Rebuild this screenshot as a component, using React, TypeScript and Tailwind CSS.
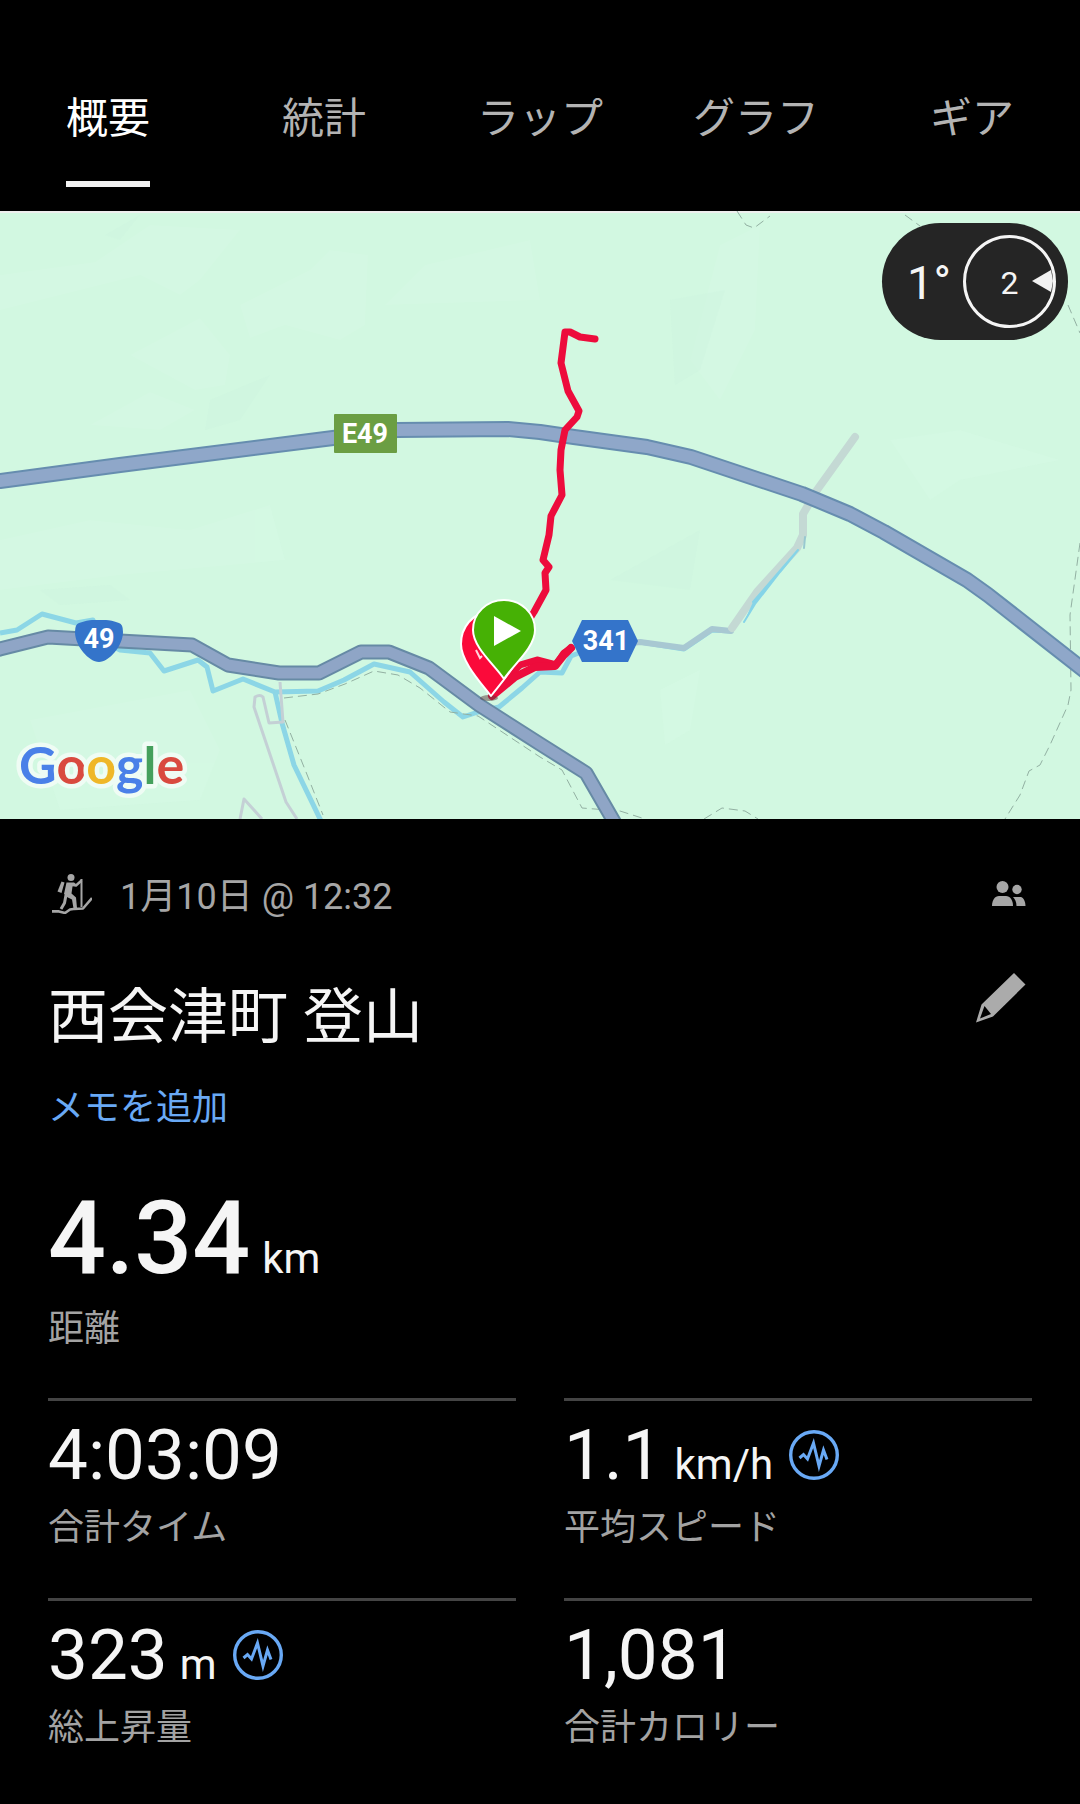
import { useState } from "react";

const FONT = "font-['Roboto','Noto_Sans_CJK_JP',sans-serif]";

const tabs = ["概要", "統計", "ラップ", "グラフ", "ギア"];

const MOTORWAY =
  "M-10 482 L0 481 L120 465 L333 438 L397 430 L508 429 L540 432 L574 437 L647 447 L691 457 L802 494 L850 514 L884 532 L967 580 L988 595 L1090 675";
const NATIONAL =
  "M-10 652 L0 649 L48 637 L192 645 L228 665 L279 673 L319 673 L361 652 L389 652 L429 668 L479 705 L540 744 L586 773 L616 825";

function RouteMap() {
  return (
    <svg viewBox="0 211 1080 608" className="block w-full" role="img" aria-label="ルートマップ">
      <rect x="0" y="211" width="1080" height="608" fill="#d2f8e1" />
      <g fill="#d8fae6" opacity="0.4">
        <path d="M0 275 L95 262 L150 225 L240 230 L200 280 L180 295 L140 275 L0 310 Z" />
        <path d="M130 355 L200 318 L230 355 L225 385 L195 390 Z" />
        <path d="M240 305 L310 270 L330 250 L368 255 L365 325 L340 340 L285 325 L250 338 Z" />
        <path d="M385 305 L425 265 L530 240 L540 300 Z" />
        <path d="M90 425 L150 392 L195 410 L160 430 Z" />
        <path d="M0 540 L90 520 L190 530 L270 505 L285 560 L120 575 L0 590 Z" />
        <path d="M30 720 L190 690 L220 750 L200 800 L60 810 Z" />
        <path d="M720 245 L760 225 L755 330 L720 400 L690 360 Z" />
        <path d="M890 440 L960 430 L1060 460 L960 480 L930 500 Z" />
        <path d="M660 690 L700 670 L690 730 L665 745 Z" />
      </g>
      <g fill="#c9f2da" opacity="0.2">
        <path d="M105 235 L140 215 L120 240 Z" />
        <path d="M210 400 L270 375 L240 420 L205 430 Z" />
        <path d="M40 590 L110 585 L130 600 L60 605 Z" />
        <path d="M670 300 L725 290 L700 370 L675 385 Z" />
        <path d="M610 580 L700 530 L690 590 Z" />
      </g>
      <path d="M0 212 H1080" stroke="#eeefee" strokeWidth="2" />

      <g fill="none" stroke="#8cd6e6" strokeWidth="5" strokeLinejoin="round">
        <path d="M0 633 L17 630 L42 614 L76 623 L93 620 L100 640 L120 650 L150 653 L164 671 L198 660 L207 667 L213 691 L243 679 L275 692 L318 691 L344 680 L374 664 L410 672 L444 702 L463 717 L478 712 L499 707 L522 688 L540 672 L562 673 L571 656 L600 645 L640 642 L684 649 L712 630 L731 631" />
        <path d="M275 692 L282 723 L294 765 L322 823" />
      </g>
      <g fill="none" stroke="#c4d0d5" strokeWidth="3" strokeLinejoin="round">
        <path d="M280 682 L283 722 L269 723 L263 697 Q260 694 255 697 L254 707 L286 802 L297 819" />
        <path d="M240 819 L244 799 L262 819" />
      </g>
      <g fill="none" strokeLinejoin="round" strokeLinecap="round">
        <path d="M731 631 L712 629 L684 648 L640 642 L600 647" stroke="#a8c8d2" strokeWidth="6" />
        <path d="M855 437 L817 490 L803 514 L803 535 L797 548 L757 592 L732 628" stroke="#c4d9d4" strokeWidth="8" />
        <path d="M753 602 L798 550 L780 572 L755 604 L744 622" fill="#85d4e8" stroke="#85d4e8" strokeWidth="2" />
        <path d="M805 537 L804 548" stroke="#98c8d0" strokeWidth="2" />
      </g>

      <g fill="none" stroke="#92b0a2" strokeWidth="1" strokeDasharray="9 5">
        <path d="M737 211 L746 225 L754 228 L770 216" />
        <path d="M905 215 L920 226" />
        <path d="M1068 305 L1080 333" />
        <path d="M1080 543 L1070 615 L1071 690 L1068 705 L1050 745 L1040 765 L1029 771 L1020 795 L1005 819" />
        <path d="M284 698 L318 694 L345 684 L374 671 L398 675 L420 688 L450 712 L478 716 L540 757 L562 770 L582 808 L620 811 L645 819" />
        <path d="M285 720 L306 772 L323 815" />
        <path d="M704 819 L722 808 L745 811 L758 819" />
      </g>

      <g fill="none" strokeLinejoin="round">
        <path d={MOTORWAY} stroke="#668daf" strokeWidth="16" />
        <path d={MOTORWAY} stroke="#8fa7c9" strokeWidth="12" />
        <path d={NATIONAL} stroke="#668aa5" strokeWidth="15" />
        <path d={NATIONAL} stroke="#8fa5c6" strokeWidth="11" />
      </g>

      <g fill="none" stroke="#ed0c3c" strokeWidth="7" strokeLinejoin="round" strokeLinecap="round">
        <path d="M595 339 L580 337 L570 332 L565 332 L561 363 L568 391 L579 411 L577 417 L565 430 L561 450 L560 470 L562 495 L551 516 L549 535 L543 560 L549 567 L545 573 L546 590 L534 612 L510 650" />
        <path d="M571 648 L564 653 L556 665 L537 660 L520 665 L500 684" />
        <path d="M571 648 L563 656 L555 666 L535 667 L515 677 L492 696" strokeWidth="8" />
      </g>

      <ellipse cx="489" cy="698" rx="9" ry="3" fill="#5c3a3a" opacity="0.5" />
      <path
        d="M491 696 C482 684 461 662 461 644 C461 628 472 612 491 612 C510 612 521 628 521 644 C521 662 500 684 491 696 Z"
        fill="#fb0a3a"
        stroke="#ffffff"
        strokeWidth="2"
        strokeLinejoin="round"
      />
      <path d="M476 650 L480 658 L482 656" fill="none" stroke="#ffd5dc" strokeWidth="2" />
      <path
        d="M504 679 C496 666 473 648 473 630 C473 613 487 600 504 600 C521 600 535 613 535 630 C535 648 512 666 504 679 Z"
        fill="#46b105"
        stroke="#ffffff"
        strokeWidth="2"
        strokeLinejoin="round"
      />
      <path d="M494 616 L521 631 L494 646 Z" fill="#ffffff" />

      <rect x="334" y="414" width="63" height="39" rx="1" fill="#6b9e43" />
      <path
        d="M79 623 Q88 620 92 620 H106 Q111 620 119 623 Q123 624 123 632 C123 646 109 662 99 662 C89 662 75 646 75 632 Q75 624 79 623 Z"
        fill="#3474ca"
      />
      <path d="M582 620 H628 L638 641 L628 662 H582 L572 641 Z" fill="#3474ca" />
      <g className={FONT} fill="#ffffff" fontWeight="700" fontSize="27" textAnchor="middle">
        <text x="365" y="443">E49</text>
        <text x="99" y="648">49</text>
        <text x="606" y="650">341</text>
      </g>

      <text
        x="19"
        y="784"
        className="font-['Lato',sans-serif]"
        fontSize="52"
        fontWeight="700"
        stroke="#effcf4"
        strokeWidth="9"
        strokeLinejoin="round"
        paintOrder="stroke"
      >
        <tspan fill="#4a80e8">G</tspan>
        <tspan fill="#d94a3f">o</tspan>
        <tspan fill="#efb728">o</tspan>
        <tspan fill="#4a80e8">g</tspan>
        <tspan fill="#45a05c">l</tspan>
        <tspan fill="#d94a3f">e</tspan>
      </text>
    </svg>
  );
}

function SnowshoeIcon() {
  return (
    <svg viewBox="0 0 40 40" className="size-10" fill="none" stroke="currentColor" strokeLinejoin="round" aria-hidden="true">
      <circle cx="19" cy="3.6" r="3.5" fill="currentColor" stroke="none" />
      <path d="M9.5 7.5 L12.5 8.5 L9.5 19 L5.5 17.5 Z" fill="currentColor" stroke="none" />
      <path d="M14.5 8.5 L22 8.5 L24 10 L20.5 12.5 L19.5 19.5 L24 23.5 L25 34 L21.5 34.5 L20 25.5 L15 23 L12 20 Z" fill="currentColor" stroke="none" />
      <path d="M14 21 L12.5 29 L9 35" strokeWidth="3" />
      <path d="M21 11 L24 11.5 L29.5 6.5" strokeWidth="2.4" />
      <path d="M29.5 5 V33" strokeWidth="2" />
      <path d="M0 37.4 H7 L13 39 L18 35.5 L25 34.5 M22 35 L31 34.5 L40 24" strokeWidth="2.6" />
    </svg>
  );
}

function PeopleIcon() {
  return (
    <svg viewBox="0 0 34 26" className="h-[26px] w-[34px]" fill="currentColor" aria-hidden="true">
      <circle cx="10.5" cy="6" r="6" />
      <circle cx="25" cy="8.5" r="4.7" />
      <path d="M0 25 C0 19 3 15 7 15 H14 C18 15 21 19 21 25 Z" />
      <path d="M21 16 H29 C32 17 33.5 21 33.5 25 H24.5 C24.5 21 23 18 21 16 Z" />
    </svg>
  );
}

function PencilIcon() {
  return (
    <svg viewBox="0 0 50 50" className="size-[50px]" fill="currentColor" aria-hidden="true">
      <path
        fillRule="evenodd"
        d="M38 0 L49.5 11.5 L17 43.5 L0 49.5 L5.5 31.5 Z M8.5 33 L4 45.5 L15 41 Z"
      />
    </svg>
  );
}

function PulseIcon() {
  return (
    <svg viewBox="0 0 50 50" className="size-[50px]" fill="none" stroke="currentColor" aria-hidden="true">
      <circle cx="25" cy="25" r="23.3" strokeWidth="3.4" />
      <path d="M10.5 28 L14.5 24.5 L18.5 29 L24.5 13 L30 36 L34.5 20 L38 29.5" strokeWidth="3" strokeMiterlimit="5" />
    </svg>
  );
}

type Stat = { value: string; unit?: string; label: string; graph?: boolean };

const stats: Stat[] = [
  { value: "4:03:09", label: "合計タイム" },
  { value: "1.1", unit: "km/h", label: "平均スピード", graph: true },
  { value: "323", unit: "m", label: "総上昇量", graph: true },
  { value: "1,081", label: "合計カロリー" },
];

function StatCell({ value, unit, label, graph }: Stat) {
  return (
    <div className="flex h-[200px] flex-col border-t-[3px] border-[#444444] pt-3">
      <dd className="order-1 flex items-center text-[#f5f5f5]">
        <span className="text-[71px] leading-[84px]">
          {value}
          {unit && <span className="ml-3 text-[42px] leading-none">{unit}</span>}
        </span>
        {graph && (
          <button type="button" aria-label={`${label}のグラフ`} className="ml-4 text-[#69a9f5]">
            <PulseIcon />
          </button>
        )}
      </dd>
      <dt className="order-2 mt-1 text-4xl leading-[54px] text-[#a3a3a3]">{label}</dt>
    </div>
  );
}

export default function App() {
  const [active, setActive] = useState(0);
  return (
    <div lang="ja" className={`min-h-screen bg-black text-[#f5f5f5] ${FONT}`}>
      <nav className="grid grid-cols-5 pt-[88px] pb-6" role="tablist">
        {tabs.map((tab, i) => (
          <button
            key={tab}
            type="button"
            role="tab"
            aria-selected={i === active}
            onClick={() => setActive(i)}
            className={
              i === active
                ? "mx-auto border-b-[6px] border-[#f2f2f2] pb-8 text-[42px] leading-[61px] text-white"
                : "mx-auto border-b-[6px] border-transparent pb-8 text-[42px] leading-[61px] text-[#b3b3b3]"
            }
          >
            {tab}
          </button>
        ))}
      </nav>

      <section className="relative">
        <RouteMap />
        <button
          type="button"
          aria-label="コンパス"
          className="absolute top-3 right-3 flex h-[117px] w-[186px] items-center justify-end gap-3 rounded-full bg-[#252525] pr-3"
        >
          <span className="pt-0.5 text-[47px] leading-none">1°</span>
          <span className="relative flex size-[93px] items-center justify-center rounded-full border-[3px] border-[#f5f5f5] pt-0.5 text-[32px] leading-none">
            2
            <svg viewBox="0 0 21 22" className="absolute top-8 right-0 h-[22px] w-[21px]" fill="#f2f2f2" aria-hidden="true">
              <path d="M0 11 L19 0 L21 11 L19 22 Z" />
            </svg>
          </span>
        </button>
      </section>

      <main className="px-12 pt-12">
        <div className="flex h-[54px] items-center text-[#a6a6a6]">
          <span className="ml-1">
            <SnowshoeIcon />
          </span>
          <p className="ml-7 pt-1.5 text-4xl leading-[54px]">1月10日 @ 12:32</p>
          <button type="button" aria-label="プライバシー" className="mr-1.5 ml-auto">
            <PeopleIcon />
          </button>
        </div>

        <div className="mt-12 flex items-start justify-between">
          <h1 className="text-6xl leading-[98px]">西会津町 登山</h1>
          <button type="button" aria-label="編集" className="mt-1 mr-1.5 text-[#ababab]">
            <PencilIcon />
          </button>
        </div>

        <a href="#memo" className="mt-3.5 block w-fit text-4xl leading-[54px] text-[#69a9f5]">
          メモを追加
        </a>

        <dl className="mt-[43px] flex flex-col">
          <dd className="order-1 text-[102px] leading-[120px] font-medium">
            4.34
            <span className="ml-3 text-[42px] leading-none font-normal">km</span>
          </dd>
          <dt className="order-2 mt-1 text-4xl leading-[54px] text-[#a3a3a3]">距離</dt>
        </dl>

        <dl className="mt-[42px] grid grid-cols-2 gap-x-12">
          {stats.map((s) => (
            <StatCell key={s.label} {...s} />
          ))}
        </dl>
      </main>
    </div>
  );
}
